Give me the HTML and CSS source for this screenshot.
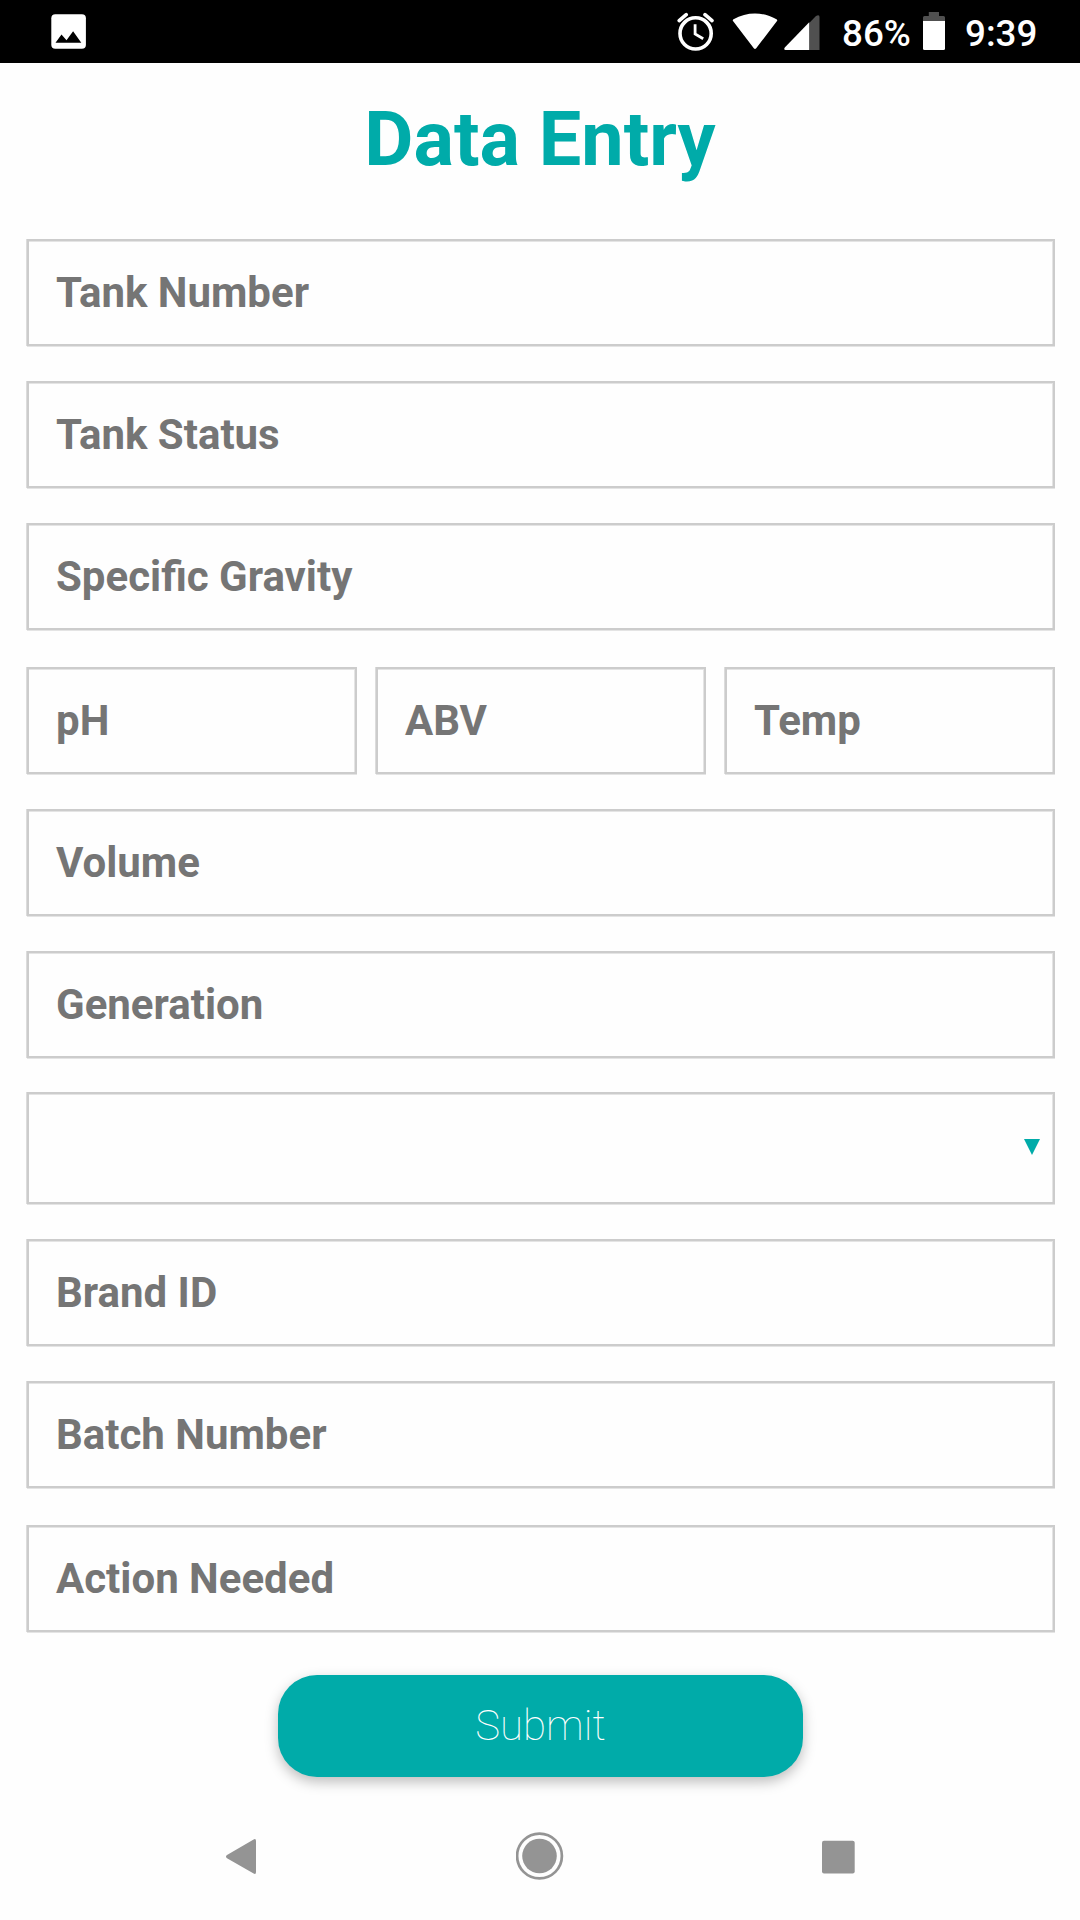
FILE: index.html
```html
<!DOCTYPE html>
<html lang="en">
<head>
<meta charset="utf-8">
<title>Data Entry</title>
<link rel="stylesheet" href="styles.css">
</head>
<body>
<div class="screen">
  <header class="status-bar">
    <svg class="icon-image" width="36" height="36" viewBox="0 0 36 36"><rect x=".3" y=".2" width="34.6" height="34.6" rx="4" fill="#fff"/><path d="M4.5 28.8 10.5 20.5 15.5 26.3 22.1 17.3 30.3 28.8Z" fill="#000"/></svg>
    <svg class="icon-alarm" width="38" height="40" viewBox="0 0 38 40" fill="none" stroke="#fff"><circle cx="18.6" cy="21.4" r="15.6" stroke-width="3.6"/><path d="M18.1 12.2V22L26.2 26.8" stroke-width="2.8"/><path d="M2.2 8.6 9.2 2.6M35 8.6 28 2.6" stroke-width="3.6" stroke-linecap="round"/></svg>
    <svg class="icon-wifi" width="46" height="38" viewBox="0 0 46 38"><path d="M1.2 8.3Q.2 7.2 1.5 6.3C15-1.5 31-1.5 44.5 6.3Q45.8 7.2 44.8 8.3L24.2 35.2Q23 36.8 21.8 35.2Z" fill="#fff"/></svg>
    <svg class="icon-signal" width="36" height="36" viewBox="0 0 36 36"><path d="M25.2 8 32 1Q35.5-1 35.5 2V35H25.2Z" fill="#505050"/><path d="M25.2 7.2V35H1.5Q-.6 34.6.8 32.5Z" fill="#fff"/></svg>
    <span class="battery-level">86%</span>
    <svg class="icon-battery" width="22" height="38" viewBox="0 0 22 38"><path d="M5.8 0H16V4H20.5Q22 4 22 5.5V9H0V5.5Q0 4 1.5 4H5.8Z" fill="#505050"/><path d="M0 9H22V36.4Q22 38 20.5 38H1.5Q0 38 0 36.4Z" fill="#fff"/></svg>
    <span class="clock">9:39</span>
  </header>

  <h1 class="title">Data Entry</h1>

  <form class="form">
    <label class="field"><span>Tank Number</span><input type="text"></label>
    <label class="field"><span>Tank Status</span><input type="text"></label>
    <label class="field"><span>Specific Gravity</span><input type="text"></label>
    <div class="field-row">
      <label class="field"><span>pH</span><input type="text"></label>
      <label class="field"><span>ABV</span><input type="text"></label>
      <label class="field"><span>Temp</span><input type="text"></label>
    </div>
    <label class="field"><span>Volume</span><input type="text"></label>
    <label class="field"><span>Generation</span><input type="text"></label>
    <div class="field field-select">
      <svg width="16" height="18" viewBox="0 0 16 18"><path d="M0 0H16L8 16Z" fill="#00aba9"/></svg>
    </div>
    <label class="field"><span>Brand ID</span><input type="text"></label>
    <label class="field"><span>Batch Number</span><input type="text"></label>
    <label class="field field-last"><span>Action Needed</span><input type="text"></label>
    <button class="submit" type="button">Submit</button>
  </form>

  <nav class="nav-bar">
    <svg width="32" height="48" viewBox="0 0 32 48"><path d="M28.2 7.7Q31 5.8 31 9V40Q31 43.3 28.2 41.2L2 26.3Q0 24.7 2 23.1Z" fill="#949494"/></svg>
    <svg width="48" height="48" viewBox="0 0 48 48"><circle cx="23.5" cy="24" r="22.4" fill="none" stroke="#949494" stroke-width="2.7"/><circle cx="23.5" cy="24" r="17.3" fill="#949494"/></svg>
    <svg width="33" height="48" viewBox="0 0 33 48"><rect y="8.7" width="32.7" height="32.8" rx="2" fill="#949494"/></svg>
  </nav>
</div>
</body>
</html>
```
FILE: styles.css
```css
* {
  box-sizing: border-box;
}

body {
  margin: 0;
  background: #fefefe;
  font-family: Roboto, "Liberation Sans", sans-serif;
}

svg {
  display: block;
  flex: none;
}

.screen {
  display: flex;
  flex-direction: column;
  width: 1080px;
  height: 1920px;
  overflow: hidden;
}

.status-bar {
  display: flex;
  align-items: flex-start;
  height: 63px;
  padding-left: 51px;
  background: #000;
  color: #fff;
  font-size: 36.75px;
  font-weight: 500;
  line-height: 43px;
}

.icon-image { margin-top: 14px; }
.icon-alarm { margin: 12px 0 0 590px; }
.icon-wifi { margin: 13px 0 0 17px; }
.icon-signal { margin: 15px 0 0 6px; }
.battery-level { width: 81px; margin: 12px 0 0 22px; }
.icon-battery { margin-top: 12px; }
.clock { margin: 12px 0 0 20px; }

.title {
  height: 90px;
  margin: 31px 0 55px;
  color: #00aba9;
  font-size: 75.6px;
  font-weight: 700;
  line-height: 90px;
  text-align: center;
}

.form {
  display: flex;
  flex-direction: column;
  gap: 35px;
  padding: 0 25px 0 27px;
}

.field {
  display: flex;
  align-items: center;
  min-width: 0;
  height: 107px;
  padding: 0 27px;
  border: 2px solid #ccc;
  box-shadow: -1px 0 #dcdcdc, 0 1px #e4e4e4, inset -1px 0 #e4e4e4, inset 0 1px #e4e4e4;
  color: #757575;
  font-size: 42px;
  font-weight: 700;
  white-space: nowrap;
}

.field input {
  flex: 1;
  width: 0;
  min-width: 0;
  padding: 0;
  border: 0;
  outline: 0;
  background: none;
  font: inherit;
}

.field-row {
  display: grid;
  grid-template-columns: repeat(3, 1fr);
  gap: 19px;
  margin-top: 2px;
}

.field-select {
  justify-content: flex-end;
  height: 112px;
  margin-top: -1px;
  padding: 0 13px;
}

.field-last {
  margin-top: 2px;
}

.submit {
  align-self: center;
  width: 525px;
  height: 102px;
  margin: 8px 1px 0 0;
  padding: 0 0 2px;
  border: 0;
  border-radius: 39px;
  background: #00aba9;
  box-shadow: 0 5px 13px rgba(0, 0, 0, 0.26);
  color: #fff;
  font-family: inherit;
  font-size: 42px;
  font-weight: 100;
}

.nav-bar {
  display: flex;
  justify-content: space-between;
  margin-top: 55px;
  padding: 0 225px;
}
```
